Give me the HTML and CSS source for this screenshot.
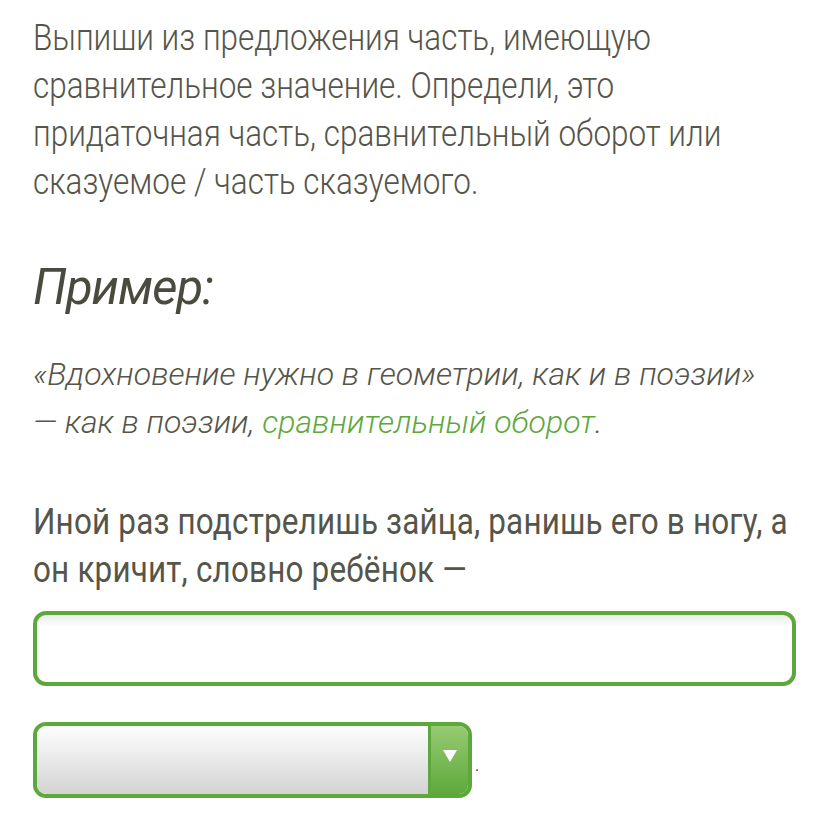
FILE: index.html
```html
<!DOCTYPE html>
<html lang="ru">
<head>
    <meta charset="UTF-8">
    <meta name="viewport" content="width=device-width, initial-scale=1.0">
    <title>Сравнительное значение</title>
    <link rel="stylesheet" href="styles.css">
</head>
<body>
    <div class="task">
        <p class="task-text condensed">Выпиши из предложения часть, имеющую сравнительное значение. Определи, это придаточная часть, сравнительный оборот или сказуемое / часть сказуемого.</p>

        <h2 class="example-title">Пример:</h2>
        <p class="example-text">«Вдохновение нужно в геометрии, как и в поэзии» — как в поэзии, <span class="hint">сравнительный оборот</span>.</p>

        <p class="sentence condensed">Иной раз подстрелишь зайца, ранишь его в ногу, а он кричит, словно ребёнок —</p>

        <input class="answer-input" type="text">

        <div class="select-row">
            <div class="select-box">
                <div class="select-value"></div>
                <div class="select-arrow"></div>
            </div>
            <span class="dot">.</span>
        </div>
    </div>
</body>
</html>
```

FILE: styles.css
```css
:root {
    --text-color: #55554a;
    --title-color: #4a4a3e;
    --green: #5da83b;
    --radius: 13px;
}

* {
    margin: 0;
    padding: 0;
    box-sizing: border-box;
}

body {
    font-family: Roboto, sans-serif;
    color: var(--text-color);
    background-color: #ffffff;
    overflow-x: hidden;
}

.task {
    padding: 14px 33px 0 33px;
    overflow: hidden;
}

/* no condensed face installed, so squeeze the regular one */
.condensed {
    transform: scaleX(0.85);
    transform-origin: left top;
}

.task-text {
    width: 819px;
    font-size: 37px;
    font-weight: 300;
    line-height: 48px;
}

.example-title {
    margin-top: 54px;
    font-size: 49px;
    font-style: italic;
    font-weight: 400;
    line-height: 56px;
    letter-spacing: -1px;
    color: var(--title-color);
}

.example-text {
    width: 740px;
    margin-top: 34px;
    font-size: 32px;
    font-style: italic;
    font-weight: 300;
    line-height: 48px;
}

.hint {
    color: var(--green);
}

.sentence {
    width: 896px;
    margin-top: 52px;
    font-size: 37px;
    font-weight: 400;
    line-height: 48px;
    letter-spacing: 0.2px;
}

.answer-input {
    display: block;
    width: 763px;
    height: 75px;
    margin-top: 17px;
    border: 4px solid var(--green);
    border-radius: var(--radius);
    background: linear-gradient(#ececec, #ffffff 18%);
    outline: none;
}

.select-row {
    display: flex;
    align-items: flex-end;
    margin-top: 36px;
}

.select-box {
    display: flex;
    width: 439px;
    height: 76px;
    border: 4px solid var(--green);
    border-radius: var(--radius);
    overflow: hidden;
}

.select-value {
    flex: 1;
    background: linear-gradient(#fefefe, #d3d3d3);
    border-right: 3px solid var(--green);
}

.select-arrow {
    width: 37px;
    display: flex;
    align-items: center;
    justify-content: center;
    background: linear-gradient(#97ca72, #5ea93c);
}

.select-arrow::after {
    content: "";
    border-left: 7px solid transparent;
    border-right: 7px solid transparent;
    border-top: 12px solid #ffffff;
    margin-top: -8px;
}

.dot {
    font-size: 16px;
    line-height: 16px;
    color: #333333;
    margin: 0 0 24px 3px;
}
```
